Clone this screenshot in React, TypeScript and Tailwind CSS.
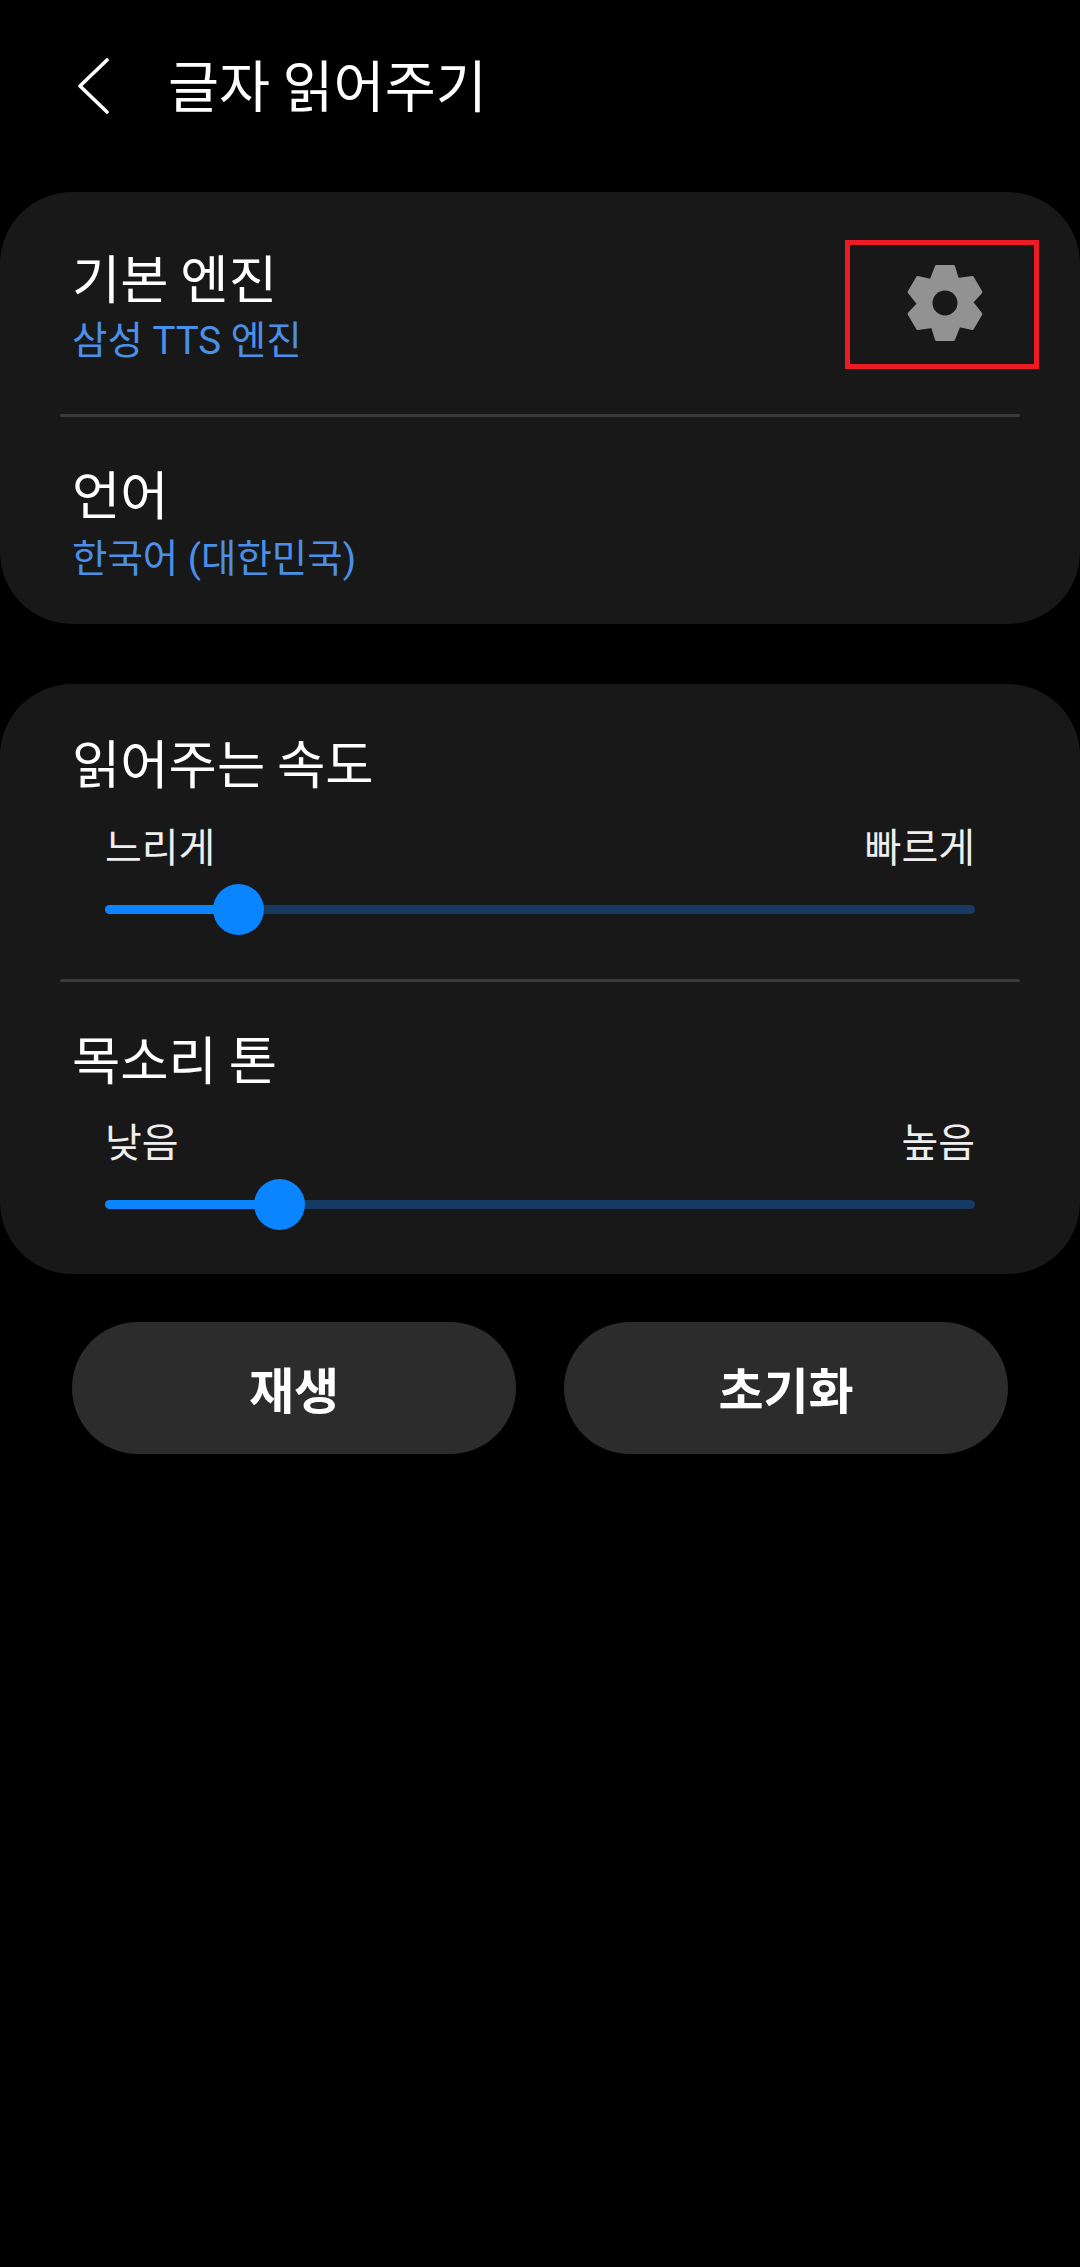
import React from "react";

// six-toothed gear, points around a centre of 40,40
const gearPoints = [0, 60, 120, 180, 240, 300]
  .flatMap((deg) => {
    const a = (deg * Math.PI) / 180;
    const rot = (x: number, y: number) =>
      `${(40 + x * Math.cos(a) - y * Math.sin(a)).toFixed(2)},${(40 + x * Math.sin(a) + y * Math.cos(a)).toFixed(2)}`;
    return [rot(-8.5, -36.5), rot(8.5, -36.5), rot(12.6, -23.4)];
  })
  .join(" ");

const SUB_FONT = 'Roboto, "Noto Sans CJK KR", sans-serif';

const Slider: React.FC<{ left: string; right: string; value: number }> = ({ left, right, value }) => (
  <div className="px-[33px]">
    <div className="flex justify-between text-[40px] leading-[56px] text-[#eeeeee]">
      <span>{left}</span>
      <span>{right}</span>
    </div>
    <div className="relative mt-[11px] flex h-[51px] items-center">
      <div className="h-[9px] w-full rounded-full bg-[#173a63]" />
      <div
        className="absolute left-0 top-[21px] h-[9px] rounded-full bg-[#0a84ff]"
        style={{ width: value }}
      />
      <div
        className="absolute top-0 h-[51px] w-[51px] rounded-full bg-[#0a84ff]"
        style={{ left: value - 25 }}
      />
    </div>
  </div>
);

const Divider = () => <div className="mx-[60px] h-[3px] rounded-full bg-[#3a3a3a]" />;

export default function App() {
  return (
    <div
      className="h-[2267px] w-[1080px] overflow-hidden bg-black text-white"
      style={{ fontFamily: '"Noto Sans CJK KR", "Noto Sans", sans-serif' }}
    >
      <header className="flex h-[192px] items-start pl-[78px] pt-[53px]">
        <svg width="32" height="56" viewBox="0 0 32 56" fill="none" className="mt-[5px]">
          <path d="M29 2 L2 28 L29 54" stroke="#ffffff" strokeWidth="3.6" strokeLinecap="round" strokeLinejoin="round" />
        </svg>
        <h1 className="ml-[58px] text-[55.5px] leading-[60px] font-normal">글자 읽어주기</h1>
      </header>

      <section className="relative h-[432px] rounded-[72px] bg-[#181818]">
        <div className="h-[222px] pl-[72px] pt-[53px]">
          <div className="text-[52.5px] leading-[62px]">기본 엔진</div>
          <div className="mt-[8px] text-[38.5px] leading-[52px] text-[#4a90e8]" style={{ fontFamily: SUB_FONT }}>
            삼성 TTS 엔진
          </div>
        </div>
        {/* red annotation box around the gear */}
        <div className="absolute left-[845px] top-[48px] flex h-[129px] w-[194px] items-center justify-center border-[5px] border-[#ed1c24]">
          <svg width="80" height="80" viewBox="0 0 80 80" className="mb-[3px] ml-[6px]">
            <polygon points={gearPoints} fill="#929292" stroke="#929292" strokeWidth="3" strokeLinejoin="round" />
            <circle cx="40" cy="40" r="12.5" fill="#181818" />
          </svg>
        </div>
        <Divider />
        <div className="pl-[72px] pt-[44px]">
          <div className="text-[52.5px] leading-[62px]">언어</div>
          <div className="mt-[10px] text-[38.5px] leading-[52px] text-[#4a90e8]" style={{ fontFamily: SUB_FONT }}>
            한국어 (대한민국)
          </div>
        </div>
      </section>

      <section className="mt-[60px] h-[590px] rounded-[72px] bg-[#181818] pt-[46px]">
        <div className="px-[72px]">
          <div className="text-[52.5px] leading-[62px]">읽어주는 속도</div>
        </div>
        <div className="mt-[25px] px-[72px]">
          <Slider left="느리게" right="빠르게" value={133} />
        </div>
        <div className="mt-[44px]">
          <Divider />
        </div>
        <div className="mt-[44px] px-[72px]">
          <div className="text-[52.5px] leading-[62px]">목소리 톤</div>
        </div>
        <div className="mt-[24px] px-[72px]">
          <Slider left="낮음" right="높음" value={174} />
        </div>
      </section>

      <div className="mt-[48px] flex gap-[48px] px-[72px]">
        <button className="h-[132px] w-[444px] rounded-full bg-[#2c2c2c] text-[49px] font-bold">재생</button>
        <button className="h-[132px] w-[444px] rounded-full bg-[#2c2c2c] text-[49px] font-bold">초기화</button>
      </div>
    </div>
  );
}
